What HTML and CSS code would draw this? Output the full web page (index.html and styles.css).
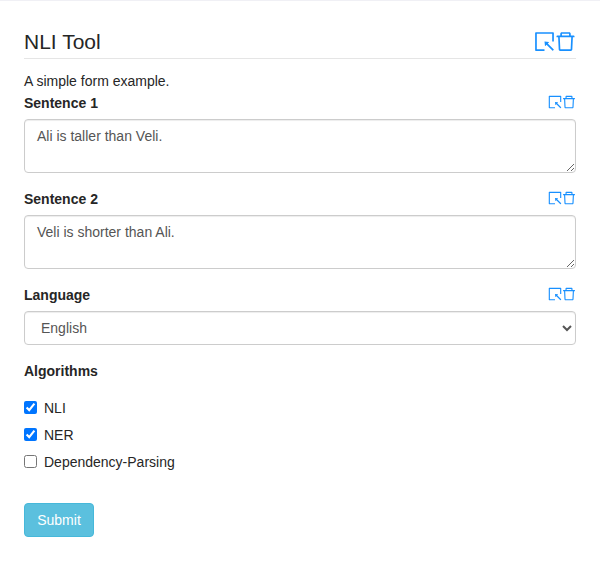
FILE: index.html
```html
<!DOCTYPE html>
<html lang="en">
<head>
<meta charset="utf-8">
<title>NLI Tool</title>
<link rel="stylesheet" href="styles.css">
</head>
<body>
<svg class="defs">
  <symbol id="edit" viewBox="64 64 896 896"><path d="M880 112H144c-17.7 0-32 14.3-32 32v736c0 17.7 14.3 32 32 32h360c4.4 0 8-3.6 8-8v-56c0-4.4-3.6-8-8-8H184V184h656v320c0 4.4 3.6 8 8 8h56c4.4 0 8-3.6 8-8V144c0-17.7-14.3-32-32-32zM653.3 599.4l52.2-52.2a8.01 8.01 0 00-4.7-13.6l-179.4-21c-5.1-.6-9.5 3.7-8.9 8.9l21 179.4c.8 6.6 8.9 9.4 13.6 4.7l52.4-52.4 256.2 256.2c3.1 3.1 8.2 3.1 11.3 0l42.4-42.4c3.1-3.1 3.1-8.2 0-11.3L653.3 599.4z"/></symbol>
  <symbol id="trash" viewBox="64 64 896 896"><path d="M360 184h-8c4.400 0 8-3.600 8-8v8h304v-8c0 4.400 3.600 8 8 8h-8v72h72v-80c0-35.300-28.700-64-64-64H352c-35.300 0-64 28.700-64 64v80h72v-72zm504 72H160c-17.700 0-32 14.300-32 32v32c0 4.400 3.600 8 8 8h60.400l24.700 523c1.600 34.100 29.800 61 63.900 61h454c34.200 0 62.300-26.800 63.900-61l24.700-523H888c4.400 0 8-3.600 8-8v-32c0-17.700-14.300-32-32-32zM731.300 840H292.700l-24.200-512h487l-24.200 512z"/></symbol>
</svg>
<form class="form">
  <header class="title"><h1>NLI Tool</h1><span class="icons large"><svg><use href="#edit"/></svg><svg><use href="#trash"/></svg></span></header>
  <p class="description">A simple form example.</p>
  <div class="field">
    <div class="label"><label for="s1">Sentence 1</label><span class="icons"><svg><use href="#edit"/></svg><svg><use href="#trash"/></svg></span></div>
    <textarea id="s1" class="control">Ali is taller than Veli.</textarea>
  </div>
  <div class="field">
    <div class="label"><label for="s2">Sentence 2</label><span class="icons"><svg><use href="#edit"/></svg><svg><use href="#trash"/></svg></span></div>
    <textarea id="s2" class="control">Veli is shorter than Ali.</textarea>
  </div>
  <div class="field">
    <div class="label"><label for="lang">Language</label><span class="icons"><svg><use href="#edit"/></svg><svg><use href="#trash"/></svg></span></div>
    <select id="lang" class="control"><option>English</option></select>
  </div>
  <div class="label"><span>Algorithms</span></div>
  <div class="checks">
    <label><input type="checkbox" checked>NLI</label>
    <label><input type="checkbox" checked>NER</label>
    <label><input type="checkbox">Dependency-Parsing</label>
  </div>
  <button class="submit" type="button">Submit</button>
</form>
</body>
</html>
```
FILE: styles.css
```css
* { box-sizing: border-box; }
body { margin: 0; background: #fff; border-top: 1px solid #f0f0f5; font: 14px/22px "Liberation Sans", Arial, sans-serif; color: #262626; }
.defs { display: none; }
.form { padding: 25px 24px 24px; }
.title { display: flex; justify-content: space-between; align-items: center; height: 33px; border-bottom: 1px solid #e5e5e5; }
.title h1 { margin: 0; font-size: 21px; font-weight: 400; line-height: 30px; }
.icons { display: flex; color: #1890ff; }
.icons svg { width: 14px; height: 14px; fill: currentColor; }
.icons.large { margin-top: -1px; }
.icons.large svg { width: 21px; height: 21px; }
.description { margin: 11px 0 0; }
.field { margin-bottom: 15px; }
.label { display: flex; justify-content: space-between; align-items: center; height: 22px; font-weight: 700; }
.label .icons { margin-top: -2px; }
.control { display: block; width: 100%; height: 54px; margin: 5px 0 0; padding: 6px 12px; border: 1px solid #ccc; border-radius: 4px; background: #fff; color: #555; font: 14px/20px "Liberation Sans", Arial, sans-serif; box-shadow: inset 0 1px 1px rgba(0, 0, 0, .075); }
select.control { height: 34px; }
.checks { display: flex; flex-direction: column; gap: 5px; margin-top: 15px; }
.checks label { display: flex; align-items: center; gap: 7px; height: 22px; }
.checks input { width: 13px; height: 13px; margin: 0 0 2px; }
.submit { display: block; margin-top: 30px; width: 70px; height: 34px; padding: 0; border: 1px solid #46b8da; border-radius: 4px; background: #5bc0de; color: #fff; font: 14px/20px "Liberation Sans", Arial, sans-serif; }
```
